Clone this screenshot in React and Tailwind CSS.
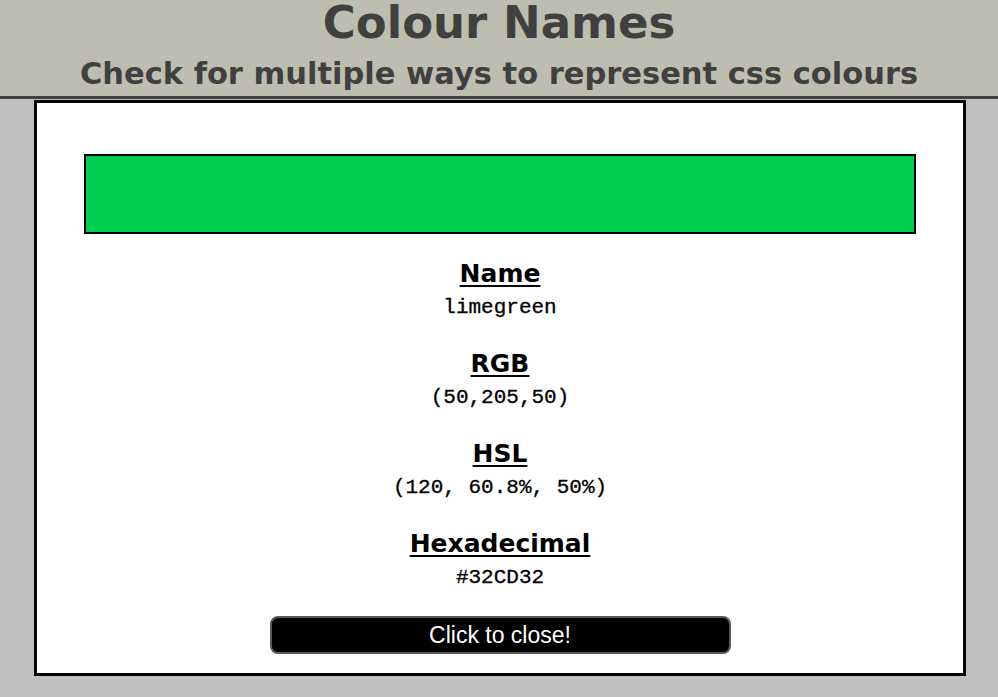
import React from 'react';

const rows = [
    { label: 'Name', value: 'limegreen' },
    { label: 'RGB', value: '(50,205,50)' },
    { label: 'HSL', value: '(120, 60.8%, 50%)' },
    { label: 'Hexadecimal', value: '#32CD32' },
];

export default function App() {
    return (
        <div className="min-h-[697px] bg-[#c0c0c0] font-['DejaVu_Sans',Verdana,sans-serif]">
            <header className="bg-[#bebeb0] border-b-[3px] border-[#404040] h-[99px] text-center text-[#404040] font-bold">
                <h1 className="text-[45px] leading-[46px]">Colour Names</h1>
                <h2 className="text-[30.5px] leading-[36px] mt-[10px]">Check for multiple ways to represent css colours</h2>
            </header>

            <div className="mt-px ml-[34px] w-[932px] bg-white border-[3px] border-black px-[47px] pt-[51px] pb-[19px]">
                <div className="h-[80px] bg-[#00cc50] border-2 border-black" />

                <div className="text-center">
                    {rows.map((row, i) => (
                        <div key={row.label} className={i === 0 ? 'mt-[25px]' : 'mt-[29px]'}>
                            <h3 className="text-[25px] leading-[30px] font-bold underline underline-offset-[3px] decoration-[2px] text-black">{row.label}</h3>
                            <p className="mt-[7px] text-[21px] leading-[24px] font-['Liberation_Mono',monospace] text-black [-webkit-text-stroke:0.3px_black]">{row.value}</p>
                        </div>
                    ))}
                </div>

                <div className="flex justify-center mt-[26px]">
                    <button className="w-[461px] h-[38px] bg-black border-2 border-[#5a5a5a] rounded-[8px] text-white text-[23px] leading-[34px] font-['Liberation_Sans',Arial,sans-serif]">
                        Click to close!
                    </button>
                </div>
            </div>
        </div>
    );
}
